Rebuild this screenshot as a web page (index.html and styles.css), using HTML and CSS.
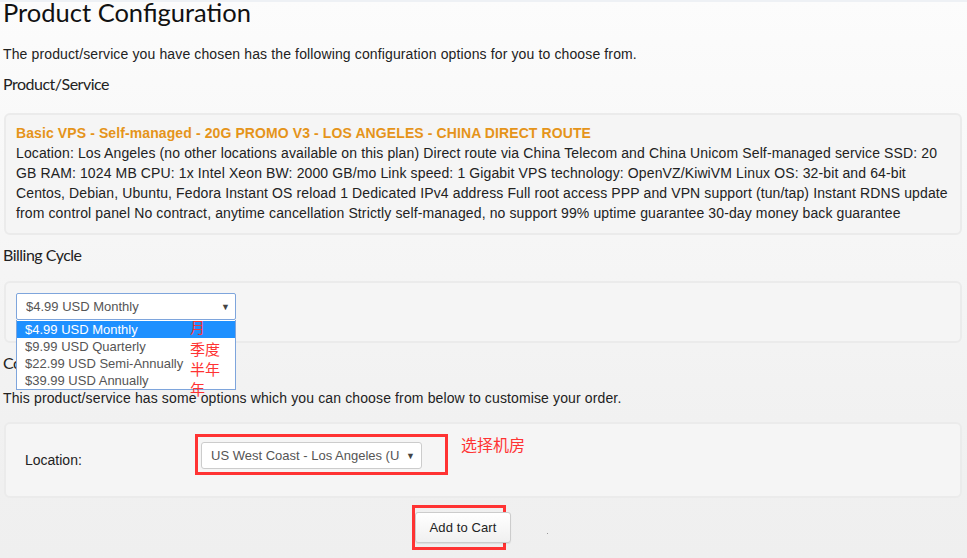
FILE: index.html
```html
<!DOCTYPE html>
<html>
<head>
<meta charset="utf-8">
<link rel="stylesheet" href="styles.css">
</head>
<body>
<div class="page">
  <h1 class="title">Product Configuration</h1>
  <p class="intro">The product/service you have chosen has the following configuration options for you to choose from.</p>

  <h2 class="section">Product/Service</h2>
  <div class="panel panel-product">
    <div class="product-name">Basic VPS - Self-managed - 20G PROMO V3 - LOS ANGELES - CHINA DIRECT ROUTE</div>
    <div class="product-desc">Location: Los Angeles (no other locations available on this plan) Direct route via China Telecom and China Unicom Self-managed service SSD: 20<br>GB RAM: 1024 MB CPU: 1x Intel Xeon BW: 2000 GB/mo Link speed: 1 Gigabit VPS technology: OpenVZ/KiwiVM Linux OS: 32-bit and 64-bit<br>Centos, Debian, Ubuntu, Fedora Instant OS reload 1 Dedicated IPv4 address Full root access PPP and VPN support (tun/tap) Instant RDNS update<br>from control panel No contract, anytime cancellation Strictly self-managed, no support 99% uptime guarantee 30-day money back guarantee</div>
  </div>

  <h2 class="section section-billing">Billing Cycle</h2>
  <div class="panel panel-billing">
    <div class="select-wrap">
      <div class="fake-select focus"><span class="sel-text">$4.99 USD Monthly</span><span class="arrow">▼</span></div>
      <div class="dropdown">
        <div class="opt active">$4.99 USD Monthly</div>
        <div class="opt">$9.99 USD Quarterly</div>
        <div class="opt">$22.99 USD Semi-Annually</div>
        <div class="opt">$39.99 USD Annually</div>
      </div>
      <div class="note-cycle">
        <div class="n1">月</div>
        <div>季度</div>
        <div>半年</div>
        <div>年</div>
      </div>
    </div>
  </div>

  <h2 class="section section-config">Configurable Options</h2>
  <p class="intro intro2">This product/service has some options which you can choose from below to customise your order.</p>
  <div class="panel panel-location">
    <div class="loc-row">
      <label class="loc-label">Location:</label>
      <div class="loc-select-box">
        <div class="fake-select loc-select"><span class="sel-text">US West Coast - Los Angeles (US)</span><span class="arrow">▼</span></div>
        <span class="note-loc">选择机房</span>
      </div>
    </div>
  </div>

  <div class="actions">
    <div class="btn-box">
      <button class="btn">Add to Cart</button>
    </div>
    <span class="dot"></span>
  </div>
</div>
</body>
</html>
```
FILE: styles.css
```css
html, body {
  margin: 0;
  padding: 0;
}
body {
  background: linear-gradient(to bottom, #fcfcfc 0px, #f7f7f7 200px, #f1f1f1 420px, #efefef 558px);
  border-top: 2px solid #eef1f5;
  min-height: 556px;
  font-family: "Liberation Sans", Arial, sans-serif;
  color: #222;
  overflow: hidden;
}
.page {
  padding: 0 5px 0 3px;
}
.title {
  font-family: "Lato", "Open Sans", sans-serif;
  font-weight: 400;
  font-size: 25.5px;
  line-height: 26px;
  margin: -3px 0 0 0;
  color: #111;
}
.intro {
  font-size: 14px;
  letter-spacing: 0.13px;
  line-height: 18px;
  margin: 20px 0 0 0;
  color: #222;
}
.section {
  font-family: "Lato", "Open Sans", sans-serif;
  font-weight: 400;
  font-size: 16px;
  letter-spacing: -0.5px;
  line-height: 20px;
  margin: 11px 0 0 0;
  color: #222;
}
.panel {
  margin-left: 1px;
  background: #f5f5f5;
  border: 2px solid #ebebeb;
  border-radius: 6px;
}
.panel-product {
  margin-top: 19px;
  padding: 8px 4px 10px 10px;
  font-size: 14px;
  letter-spacing: 0.12px;
  line-height: 20px;
}
.product-name {
  color: #e5941a;
  font-weight: bold;
  letter-spacing: 0.1px;
}
.product-desc {
  color: #222;
  white-space: nowrap;
}
.section-billing {
  margin-top: 10px;
}
.panel-billing {
  margin-top: 16px;
  padding: 10px 10px 21px 10px;
}
.select-wrap {
  position: relative;
  width: 220px;
}
.fake-select {
  box-sizing: border-box;
  height: 27px;
  background: #fff;
  border: 1px solid #ccc;
  border-radius: 3px;
  display: flex;
  align-items: center;
  padding: 0 6px 0 9px;
  font-size: 13px;
  color: #555;
  overflow: hidden;
}
.fake-select.focus {
  border-color: #7ea5dc;
  border-radius: 2px;
  padding-right: 5px;
}
.sel-text {
  flex: 1;
  white-space: nowrap;
  overflow: hidden;
}
.arrow {
  font-size: 9px;
  color: #444;
  margin-left: 6px;
}
.dropdown {
  position: absolute;
  left: 0;
  top: 27px;
  width: 220px;
  box-sizing: border-box;
  background: #fff;
  border: 1px solid #7ea5dc;
  border-top: none;
  padding-top: 1px;
  font-size: 13px;
  color: #555;
  z-index: 5;
}
.opt {
  height: 17px;
  line-height: 17px;
  padding-left: 8px;
  white-space: nowrap;
}
.opt.active {
  background: #1e90ff;
  color: #fff;
}
.note-cycle {
  position: absolute;
  left: 174px;
  top: 24px;
  font-family: "Noto Sans CJK SC", sans-serif;
  font-size: 15px;
  line-height: 20px;
  color: #f33;
  z-index: 6;
}
.note-cycle .n1 {
  margin-bottom: 2px;
}
.section-config {
  margin-top: 10px;
}
.intro2 {
  margin-top: 16px;
}
.panel-location {
  margin-top: 15px;
  padding: 18px 10px 27px 10px;
}
.loc-row {
  display: flex;
  align-items: center;
}
.loc-label {
  font-size: 14px;
  color: #222;
  width: 185px;
  padding-left: 9px;
  box-sizing: border-box;
  margin-top: 9px;
}
.loc-select-box {
  position: relative;
}
.loc-select {
  width: 221px;
}
.loc-select .arrow {
  margin-left: 6px;
}
.loc-select-box::before {
  content: "";
  position: absolute;
  left: -6px;
  top: -8px;
  width: 247px;
  height: 35px;
  border: 3px solid #f33;
}
.note-loc {
  position: absolute;
  left: 260px;
  top: -10px;
  font-family: "Noto Sans CJK SC", sans-serif;
  font-size: 16px;
  color: #f33;
  white-space: nowrap;
}
.actions {
  display: flex;
  align-items: center;
  padding-left: 409px;
  margin-top: 7px;
}
.btn-box {
  border: 3px solid #f33;
  width: 88px;
  height: 39px;
  position: relative;
}
.btn {
  position: absolute;
  left: 0;
  top: 4px;
  width: 96px;
  height: 31px;
  border: 1px solid #ccc;
  border-radius: 3px;
  background: linear-gradient(to bottom, #ffffff, #f0f0f0);
  font-family: "Liberation Sans", Arial, sans-serif;
  font-size: 13px;
  letter-spacing: 0.1px;
  color: #222;
  box-shadow: 0 1px 1px rgba(0,0,0,0.08);
}
.dot {
  width: 1px;
  height: 1px;
  background: #999;
  margin-left: 41px;
  margin-top: 12px;
}
```
